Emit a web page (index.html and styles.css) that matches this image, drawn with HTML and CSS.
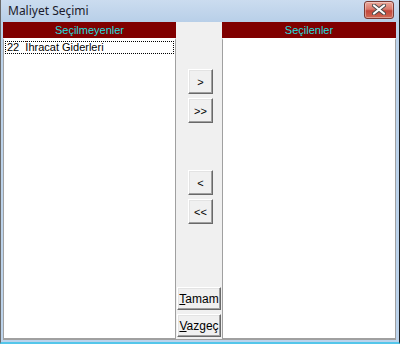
FILE: index.html
```html
<!DOCTYPE html>
<html lang="tr">
<head>
  <meta charset="UTF-8" />
  <title>Maliyet Seçimi</title>
  <link rel="stylesheet" href="styles.css">
</head>
<body>
  <div class="window">
    <div class="titlebar">
      <span class="title">Maliyet Seçimi</span>
      <button class="close-btn" title="Kapat">
        <svg width="14" height="11" viewBox="0 0 14 11">
          <path d="M2 1.5 L12 9.5 M12 1.5 L2 9.5" stroke="#4a4a4a" stroke-width="4" stroke-linecap="round"/>
          <path d="M2 1.5 L12 9.5 M12 1.5 L2 9.5" stroke="#ffffff" stroke-width="2.2" stroke-linecap="round"/>
        </svg>
      </button>
    </div>

    <div class="client">
      <div class="panel">
        <div class="panel-head">Seçilmeyenler</div>
        <div class="panel-body">
          <div class="item selected">22  İhracat Giderleri</div>
        </div>
      </div>

      <div class="middle">
        <button class="btn-arrow first">&gt;</button>
        <button class="btn-arrow">&gt;&gt;</button>
        <button class="btn-arrow group">&lt;</button>
        <button class="btn-arrow">&lt;&lt;</button>
        <button class="btn-text ok"><u>T</u>amam</button>
        <button class="btn-text"><u>V</u>azgeç</button>
      </div>

      <div class="panel">
        <div class="panel-head">Seçilenler</div>
        <div class="panel-body"></div>
      </div>
    </div>
  </div>
</body>
</html>
```

FILE: styles.css
```css
* {
  box-sizing: border-box;
}

body {
  margin: 0;
  width: 400px;
  height: 344px;
  overflow: hidden;
  font-family: 'Liberation Sans', Arial, sans-serif;
  font-size: 11px;
}

.window {
  width: 400px;
  height: 344px;
  display: flex;
  flex-direction: column;
  background: #bcd3eb;
  border-left: 1px solid #6b6b6b;
  border-right: 1px solid #1e1e1e;
  border-bottom: 2px solid #54c6ea;
}

.titlebar {
  height: 22px;
  display: flex;
  align-items: center;
  justify-content: space-between;
  padding: 0 5px 0 7px;
  background: linear-gradient(to bottom, #cbdcef, #b8cfe8);
}

.title {
  font-family: 'Noto Sans', 'Liberation Sans', sans-serif;
  font-size: 12px;
  color: #1b1b2b;
  margin-top: -2px;
}

.close-btn {
  width: 30px;
  height: 18px;
  margin-top: -3px;
  padding: 0;
  display: flex;
  align-items: center;
  justify-content: center;
  border: 1px solid #7a3a33;
  border-radius: 3px;
  background: linear-gradient(to bottom, #eaa99b 0%, #d9796a 45%, #c2463a 55%, #d06a56 100%);
  box-shadow: inset 0 0 0 1px rgba(255, 255, 255, 0.35);
}

.client {
  flex: 1;
  display: flex;
  margin: 0 3px 2px 2px;
  background: #f0f0f0;
  border-bottom: 1px solid #a0a0a0;
}

.panel {
  width: 173px;
  display: flex;
  flex-direction: column;
}

.panel:last-child {
  flex: 1;
}

.panel-head {
  height: 16px;
  line-height: 16px;
  background: #800000;
  color: #22dede;
  text-align: center;
}

.panel-body {
  flex: 1;
  background: #ffffff;
  border: 1px solid #a0a0a0;
  border-top: 2px solid #ffffff;
  padding: 1px;
}

.item {
  height: 13px;
  line-height: 12px;
  padding-left: 2px;
  white-space: pre;
  color: #000;
}

.item.selected {
  outline: 1px dotted #000;
  outline-offset: -1px;
}

.middle {
  width: 46px;
  display: flex;
  flex-direction: column;
  align-items: flex-start;
}

.btn-arrow,
.btn-text {
  font-family: 'Liberation Sans', Arial, sans-serif;
  font-size: 11px;
  color: #000;
  background: #f0f0f0;
  border: 1px solid;
  border-color: #ffffff #696969 #696969 #ffffff;
  box-shadow: inset -1px -1px #a0a0a0, inset 1px 1px #e3e3e3;
  padding: 0;
}

.btn-arrow {
  width: 25px;
  height: 25px;
  margin: 4px 0 0 12px;
}

.btn-arrow.first {
  margin-top: 47px;
}

.btn-arrow.group {
  margin-top: 47px;
}

.btn-text {
  width: 44px;
  height: 23px;
  margin: 4px 0 0 1px;
  font-size: 12px;
}

.btn-text.ok {
  margin-top: auto;
}

.btn-text:last-child {
  margin-bottom: 2px;
}
```
